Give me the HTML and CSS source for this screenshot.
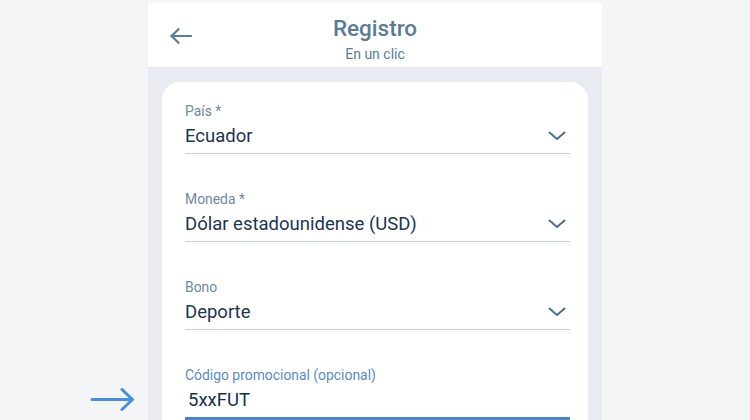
FILE: index.html
```html
<!DOCTYPE html>
<html lang="es">
<head>
    <meta charset="UTF-8">
    <meta name="viewport" content="width=device-width, initial-scale=1.0">
    <title>Registro</title>
    <link rel="stylesheet" href="styles.css">
</head>
<body>
    <div class="app">
        <header class="topbar">
            <button class="back" aria-label="Volver">
                <svg width="22" height="16" viewBox="0 0 22 16" fill="none" stroke="currentColor" stroke-width="2.2" stroke-linecap="round" stroke-linejoin="round">
                    <line x1="21" y1="8" x2="1.5" y2="8"/>
                    <polyline points="8.5,1.2 1.5,8 8.5,14.8"/>
                </svg>
            </button>
            <div class="titles">
                <h1>Registro</h1>
                <p>En un clic</p>
            </div>
            <span></span>
        </header>
        <main class="content">
            <form class="card">
                <div class="field">
                    <label>País *</label>
                    <div class="value">
                        <span>Ecuador</span>
                        <svg class="chevron" width="18" height="10" viewBox="0 0 18 10" fill="none" stroke="currentColor" stroke-width="2" stroke-linecap="round" stroke-linejoin="round"><polyline points="1.5,1.5 9,8 16.5,1.5"/></svg>
                    </div>
                </div>
                <div class="field">
                    <label>Moneda *</label>
                    <div class="value">
                        <span>Dólar estadounidense (USD)</span>
                        <svg class="chevron" width="18" height="10" viewBox="0 0 18 10" fill="none" stroke="currentColor" stroke-width="2" stroke-linecap="round" stroke-linejoin="round"><polyline points="1.5,1.5 9,8 16.5,1.5"/></svg>
                    </div>
                </div>
                <div class="field">
                    <label>Bono</label>
                    <div class="value">
                        <span>Deporte</span>
                        <svg class="chevron" width="18" height="10" viewBox="0 0 18 10" fill="none" stroke="currentColor" stroke-width="2" stroke-linecap="round" stroke-linejoin="round"><polyline points="1.5,1.5 9,8 16.5,1.5"/></svg>
                    </div>
                </div>
                <div class="field active">
                    <label>Código promocional (opcional)</label>
                    <div class="value">
                        <span class="typed">5xxFUT</span>
                    </div>
                </div>
            </form>
        </main>
    </div>
    <div class="hint-arrow">
        <svg width="46" height="24" viewBox="0 0 46 24" fill="none" stroke="currentColor" stroke-width="3" stroke-linecap="round" stroke-linejoin="round">
            <line x1="2" y1="11.5" x2="42" y2="11.5"/>
            <polyline points="32,1.5 42.5,11.5 32,21.5"/>
        </svg>
    </div>
</body>
</html>
```

FILE: styles.css
```css
:root {
    --page-bg: #f4f5f7;
    --panel-bg: #e8ecf2;
    --title-color: #5a7b98;
    --label-color: #7089a1;
    --label-active: #5b8cc2;
    --value-color: #1b3553;
    --icon-color: #4f6f8c;
    --line-color: #c9d3dc;
    --line-active: #4b85c1;
    --hint-color: #4a90d9;
}
html, body {
    height: 100%;
    overflow: hidden;
}
body {
    margin: 0;
    padding-top: 3px;
    background: var(--page-bg);
    font-family: Roboto, 'Liberation Sans', sans-serif;
    box-sizing: border-box;
}
.app {
    width: 454px;
    margin-left: 148px;
    height: 100%;
    display: flex;
    flex-direction: column;
}
.topbar {
    height: 64px;
    flex-shrink: 0;
    background: #fff;
    display: grid;
    grid-template-columns: 60px 1fr 60px;
    align-items: center;
}
.back {
    border: none;
    background: none;
    padding: 0 0 0 22px;
    margin-top: 2px;
    color: var(--title-color);
    display: flex;
    cursor: pointer;
}
.titles {
    text-align: center;
    align-self: start;
    padding-top: 12px;
}
.titles h1 {
    margin: 0;
    font-size: 22.5px;
    line-height: 26px;
    font-weight: 500;
    color: var(--title-color);
}
.titles p {
    margin: 5px 0 0;
    font-size: 14px;
    line-height: 16px;
    color: var(--title-color);
}
.content {
    flex: 1;
    min-height: 0;
    background: var(--panel-bg);
    padding: 15px 14px 0;
}
.card {
    background: #fff;
    border-radius: 18px 18px 0 0;
    padding: 21px 18px 0 23px;
    height: 100%;
    box-sizing: border-box;
    overflow: hidden;
}
.field {
    border-bottom: 1px solid var(--line-color);
    padding-bottom: 5px;
    margin-bottom: 37px;
}
.field label {
    display: block;
    font-size: 13.9px;
    line-height: 16px;
    color: var(--label-color);
    margin-bottom: 5px;
}
.value {
    display: flex;
    justify-content: space-between;
    align-items: center;
    height: 24px;
    font-size: 18.5px;
    color: var(--value-color);
}
.chevron {
    color: var(--icon-color);
    margin-right: 4px;
}
.field.active {
    border-bottom: 3px solid var(--line-active);
}
.field.active label {
    color: var(--label-active);
}
.typed {
    padding-left: 3px;
    color: #12304e;
}
.hint-arrow {
    position: absolute;
    left: 90px;
    top: 388px;
    color: var(--hint-color);
    display: flex;
}
```
